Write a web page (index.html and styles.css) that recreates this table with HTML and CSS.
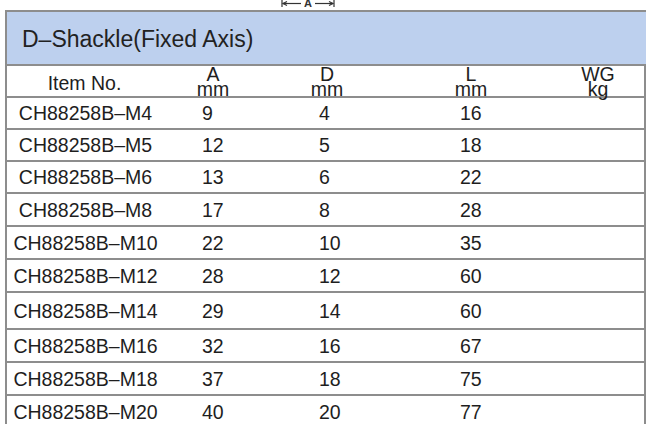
FILE: index.html
```html
<!DOCTYPE html>
<html>
<head>
<meta charset="utf-8">
<link rel="stylesheet" href="styles.css">
</head>
<body>
<div class="dim">
  <svg width="56" height="10" viewBox="0 0 56 10">
    <g stroke="#333" stroke-width="1.2" fill="none">
      <line x1="1" y1="0" x2="1" y2="7"/>
      <line x1="2" y1="3.5" x2="20" y2="3.5"/>
      <polyline points="6,1.5 2,3.5 6,5.5"/>
      <line x1="34" y1="3.5" x2="52" y2="3.5"/>
      <polyline points="48,1.5 52,3.5 48,5.5"/>
      <line x1="53" y1="0" x2="53" y2="7"/>
    </g>
    <text x="27" y="7" text-anchor="middle" class="dimtext">A</text>
  </svg>
</div>
<div class="table">
  <div class="title">D–Shackle(Fixed Axis)</div>
  <div class="row head">
    <div class="hc">Item No.</div>
    <div class="hc"><span class="stack">A<br>mm</span></div>
    <div class="hc"><span class="stack">D<br>mm</span></div>
    <div class="hc"><span class="stack">L<br>mm</span></div>
    <div class="hc"><span class="stack">WG<br>kg</span></div>
  </div>
  <div class="row"><div class="item">CH88258B–M4</div><div class="a">9</div><div class="d">4</div><div class="l">16</div><div></div></div>
  <div class="row"><div class="item">CH88258B–M5</div><div class="a">12</div><div class="d">5</div><div class="l">18</div><div></div></div>
  <div class="row"><div class="item">CH88258B–M6</div><div class="a">13</div><div class="d">6</div><div class="l">22</div><div></div></div>
  <div class="row tall1"><div class="item">CH88258B–M8</div><div class="a">17</div><div class="d">8</div><div class="l">28</div><div></div></div>
  <div class="row tall1"><div class="item">CH88258B–M10</div><div class="a">22</div><div class="d">10</div><div class="l">35</div><div></div></div>
  <div class="row tall1"><div class="item">CH88258B–M12</div><div class="a">28</div><div class="d">12</div><div class="l">60</div><div></div></div>
  <div class="row tall2"><div class="item">CH88258B–M14</div><div class="a">29</div><div class="d">14</div><div class="l">60</div><div></div></div>
  <div class="row tall1"><div class="item">CH88258B–M16</div><div class="a">32</div><div class="d">16</div><div class="l">67</div><div></div></div>
  <div class="row tall1"><div class="item">CH88258B–M18</div><div class="a">37</div><div class="d">18</div><div class="l">75</div><div></div></div>
  <div class="row tall1"><div class="item">CH88258B–M20</div><div class="a">40</div><div class="d">20</div><div class="l">77</div><div></div></div>
</div>
</body>
</html>
```
FILE: styles.css
```css
html, body {
  margin: 0;
  padding: 0;
  background: #ffffff;
}
body {
  font-family: "Liberation Sans", Arial, sans-serif;
  color: #1e1e1e;
  overflow: hidden;
}
.dim {
  height: 10px;
  padding-left: 281px;
  overflow: hidden;
}
.dim svg {
  display: block;
}
.dimtext {
  font-family: "Liberation Sans", Arial, sans-serif;
  font-size: 11px;
  font-weight: bold;
  fill: #333;
}
.table {
  margin-left: 5px;
  width: 641px;
}
.title {
  height: 52px;
  border-top: 2px solid #8d8d8d;
  border-left: 2px solid #8d8d8d;
  border-bottom: 2px solid #8d8d8d;
  background: #bdd0ee;
  display: flex;
  align-items: center;
  padding-left: 15px;
  padding-top: 2px;
  box-sizing: content-box;
  font-size: 23px;
  color: #222;
}
.title {
  height: 50px;
}
.row {
  display: grid;
  grid-template-columns: 155px 102px 126px 162px 92px;
  height: 30px;
  border-left: 2px solid #8d8d8d;
  border-right: 2px solid #8d8d8d;
  border-bottom: 2px solid #8d8d8d;
  align-items: center;
  font-size: 19.5px;
  line-height: 22px;
}
.row.tall1 {
  height: 31px;
}
.row.tall2 {
  height: 35px;
}
.hc {
  text-align: center;
}
.stack {
  display: inline-block;
  line-height: 15px;
  text-align: center;
  padding-top: 1px;
}
.item {
  text-align: center;
  padding-left: 2px;
}
.a {
  padding-left: 40px;
}
.d {
  padding-left: 55px;
}
.l {
  padding-left: 70px;
}
```
